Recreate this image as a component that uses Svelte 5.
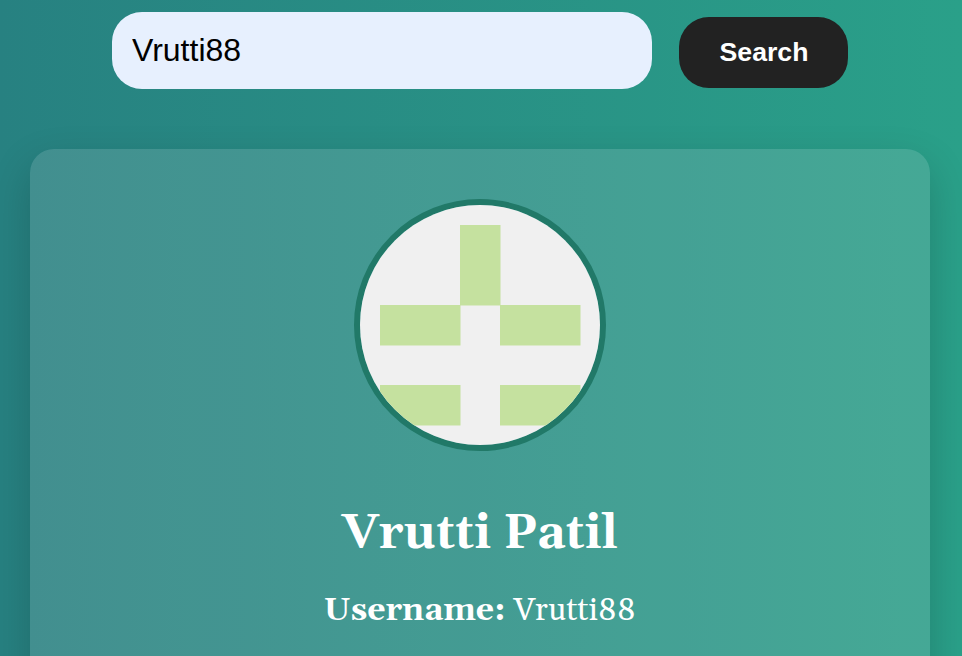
<script>
  const user = { name: 'Vrutti Patil', login: 'Vrutti88' };
  let query = $state('Vrutti88');
</script>

<main>
  <form onsubmit={(e) => e.preventDefault()}>
    <input aria-label="Username" bind:value={query} />
    <button>Search</button>
  </form>
  <section class="card">
    <svg class="avatar" viewBox="0 0 240 240" role="img" aria-label="Avatar">
      <rect width="240" height="240" fill="#f0f0f0" />
      <path fill="#c5e19f" d="M100 20h40.5v80.5h-40.5zM20 100h80.5v40.5h-80.5zM140 100h80.5v40.5h-80.5zM20 180h80.5v40.5h-80.5zM140 180h80.5v40.5h-80.5z" />
    </svg>
    <h2><span>{user.name}</span></h2>
    <p><strong>Username:</strong> <span>{user.login}</span></p>
  </section>
</main>

<style>
  :global(body) { margin: 0; overflow: hidden; }
  main {
    box-sizing: border-box;
    height: 656px;
    padding: 12px 32px 0 30px;
    overflow: hidden;
    background: linear-gradient(to right, #278181, #2aa089);
    font-family: Georgia, Gelasio, "DejaVu Serif", serif;
    color: #fff;
  }
  form { display: flex; align-items: flex-start; margin-left: 82px; gap: 27px; }
  input, button { box-sizing: border-box; border: 0; font-family: "Liberation Sans", Arial, sans-serif; }
  input { width: 540px; height: 77px; padding: 0 20px; border-radius: 30px; background: #e7f0fe; color: #000; font-size: 32px; outline: 0; }
  button { width: 169px; height: 71px; margin-top: 5px; padding: 0 0 0 1px; border-radius: 30px; background: #222; color: #fff; font-size: 26.67px; font-weight: 700; }
  .card {
    box-sizing: border-box;
    height: 700px;
    margin-top: 60px;
    padding-top: 50px;
    border-radius: 24px;
    background: rgba(248, 232, 240, .135);
    box-shadow: 0 16px 40px rgba(0, 0, 0, .18);
    display: flex;
    flex-direction: column;
    align-items: center;
  }
  .avatar { display: block; width: 240px; height: 240px; border: 6px solid #217968; border-radius: 50%; }
  h2 { margin: 53px 0 0; font-size: 48px; line-height: 60px; white-space: nowrap; }
  p { margin: 28px 0 0; font-size: 32px; line-height: 38px; white-space: nowrap; }
</style>
